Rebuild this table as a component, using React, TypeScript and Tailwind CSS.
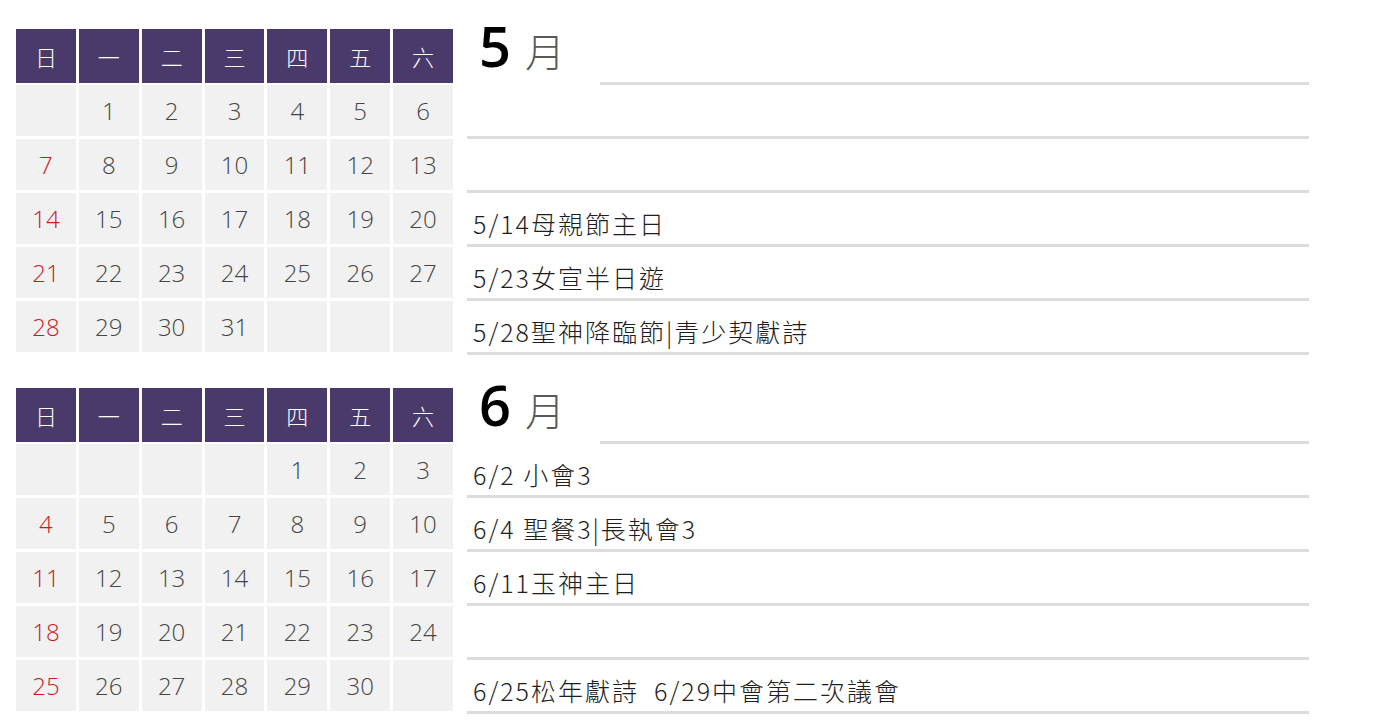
const WEEK = ["日", "一", "二", "三", "四", "五", "六"];

type Month = {
  num: string;
  offset: number;
  days: number;
  events: string[];
};

const MONTHS: Month[] = [
  {
    num: "5",
    offset: 1,
    days: 31,
    events: ["", "", "5/14母親節主日", "5/23女宣半日遊", "5/28聖神降臨節|青少契獻詩"],
  },
  {
    num: "6",
    offset: 4,
    days: 30,
    events: ["6/2 小會3", "6/4 聖餐3|長執會3", "6/11玉神主日", "", "6/25松年獻詩  6/29中會第二次議會"],
  },
];

const cjk = "font-['Noto_Sans_CJK_TC','Noto_Sans',sans-serif]";
const digits = "font-['Open_Sans','Noto_Sans_CJK_TC',sans-serif]";

function Calendar({ offset, days }: { offset: number; days: number }) {
  const cells: (number | null)[] = [];
  for (let i = 0; i < 35; i++) {
    const d = i - offset + 1;
    cells.push(d >= 1 && d <= days ? d : null);
  }
  return (
    <div className="w-[437px] shrink-0">
      <div className="grid grid-cols-7 gap-x-[3px]">
        {WEEK.map((w) => (
          <div
            key={w}
            className={`h-[54px] bg-[#4a3a6b] flex items-center justify-center text-white text-[22px] font-light ${cjk}`}
          >
            {w}
          </div>
        ))}
      </div>
      <div className="grid grid-cols-7 gap-[3px] mt-[2px]">
        {cells.map((d, i) => (
          <div
            key={i}
            className={`h-[51px] bg-[#f1f1f1] flex items-center justify-center text-[24px] font-light ${digits} ${
              i % 7 === 0 ? "text-[#c9191f]" : "text-[#454545]"
            }`}
          >
            {d ?? ""}
          </div>
        ))}
      </div>
    </div>
  );
}

function Notes({ num, events }: { num: string; events: string[] }) {
  return (
    <div className="w-[842px] ml-[14px]">
      <div className="h-[56px] flex items-end">
        <div className="w-[133px] self-start -mt-[12px] pl-[12px] flex items-baseline gap-[14px]">
          <span className={`text-[56px] leading-none font-semibold text-black ${digits}`}>{num}</span>
          <span className={`text-[40px] leading-none font-light text-[#5a5a5a] ${cjk}`}>月</span>
        </div>
        <div className="flex-1 border-b-[3px] border-[#dddddd]" />
      </div>
      {events.map((e, i) => (
        <div
          key={i}
          className="h-[54px] flex items-end pl-[6px] pb-[6px] border-b-[3px] border-[#dddddd]"
        >
          <span
            className={`text-[25px] leading-[30px] tracking-[2px] font-light text-[#1e1e1e] whitespace-pre ${cjk}`}
          >
            {e}
          </span>
        </div>
      ))}
    </div>
  );
}

export default function App() {
  return (
    <div className="w-[1400px] h-[720px] bg-white pt-[29px] pl-[16px] overflow-hidden">
      <div className="flex flex-col gap-[33px]">
        {MONTHS.map((m) => (
          <div key={m.num} className="flex">
            <Calendar offset={m.offset} days={m.days} />
            <Notes num={m.num} events={m.events} />
          </div>
        ))}
      </div>
    </div>
  );
}
